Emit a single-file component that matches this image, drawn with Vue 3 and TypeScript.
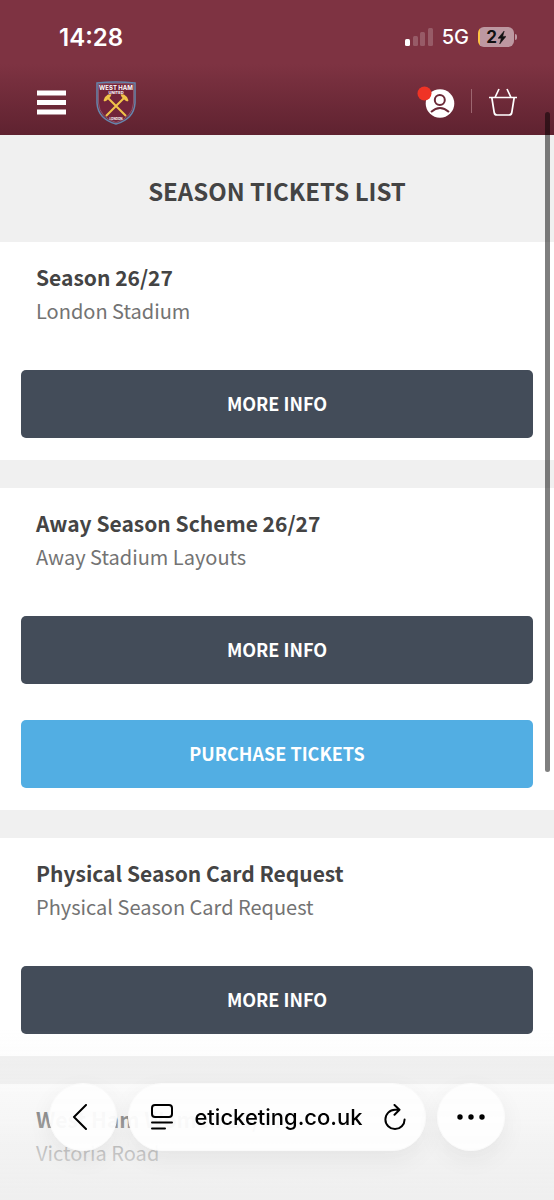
<script setup lang="ts">
interface Ticket {
  title: string
  venue: string
  actions: { label: string; buy?: boolean }[]
}

const tickets: Ticket[] = [
  { title: 'Season 26/27', venue: 'London Stadium', actions: [{ label: 'MORE INFO' }] },
  {
    title: 'Away Season Scheme 26/27',
    venue: 'Away Stadium Layouts',
    actions: [{ label: 'MORE INFO' }, { label: 'PURCHASE TICKETS', buy: true }],
  },
  { title: 'Physical Season Card Request', venue: 'Physical Season Card Request', actions: [{ label: 'MORE INFO' }] },
  { title: 'West Ham Women 26/27', venue: 'Victoria Road', actions: [] },
]

const bars = [
  { x: 0, y: 11, h: 7, on: true },
  { x: 8, y: 8, h: 10, on: false },
  { x: 15, y: 4, h: 14, on: false },
  { x: 23, y: 0, h: 18, on: false },
]
</script>

<template>
  <div class="screen">
    <header class="top">
      <div class="status">
        <time class="clock">14:28</time>
        <div class="signals">
          <svg width="28" height="18" viewBox="0 0 28 18" aria-hidden="true">
            <rect v-for="b in bars" :key="b.x" :x="b.x" :y="b.y" width="5" :height="b.h" rx="1.5" fill="#fff" :fill-opacity="b.on ? 1 : 0.2" />
          </svg>
          <span class="network">5G</span>
          <span class="battery">
            <span class="level">2</span>
            <svg width="8" height="13" viewBox="0 0 8 13" aria-hidden="true"><path d="M6.2 0 0 7.3h3.3L1.700 13 8 5.400H4.700z" fill="#111" stroke="#111" stroke-width=".5" /></svg>
          </span>
        </div>
      </div>
      <nav class="nav" aria-label="Main">
        <button class="plain" type="button" aria-label="Menu">
          <svg width="29" height="26" viewBox="0 0 29 26"><path d="M0 3h29M0 12.5h29M0 22h29" stroke="#fff" stroke-width="5" /></svg>
        </button>
        <a class="crest" href="#" aria-label="West Ham United home">
          <svg width="40" height="44" viewBox="0 0 40 44">
            <path d="M1 2Q20 0 39 2V22Q38 38 20 43Q2 38 1 22Z" fill="#72243a" stroke="#6686ad" stroke-width="1.5" />
            <path d="M2.5 3.2Q20 1.500 37.500 3.200V22Q36.500 36.500 20 41.500Q3.500 36.500 2.500 22Z" fill="none" stroke="#c9ccd8" stroke-width=".3" />
            <text x="20" y="8.500" class="crest-name">WEST HAM</text>
            <text x="20" y="12.500" class="crest-sub">UNITED</text>
            <path d="M12 17 30 35M28 17 10 35" stroke="#f1c44a" stroke-width="2" />
            <path d="M7.500 19.500 9 16l3-2.500 3.500-.300-1.200 2.800-3.600 3.500-2 1zM32.500 19.500 31 16l-3-2.500-3.500-.300 1.200 2.800 3.600 3.500 2 1z" fill="#f1c44a" />
            <text x="20" y="38.500" class="crest-city">LONDON</text>
          </svg>
        </a>
        <div class="account">
          <button class="plain profile" type="button" aria-label="Account">
            <svg width="38" height="34" viewBox="0 0 38 34">
              <circle cx="23" cy="18.500" r="14.300" fill="#fff" />
              <circle cx="22.800" cy="15" r="5" fill="none" stroke="#6b2937" stroke-width="2" />
              <path d="M14 27q9-8 18 0" fill="none" stroke="#6b2937" stroke-width="2" />
              <circle cx="7.500" cy="8.500" r="7" fill="#ef3325" />
            </svg>
          </button>
          <span class="divider"></span>
          <button class="plain basket" type="button" aria-label="Basket">
            <svg width="28" height="28" viewBox="0 0 28 28" fill="none" stroke="#fff" stroke-width="1.700" stroke-linejoin="round">
              <path d="M0 9.500h28M10 1 6 9.500M18 1l4 8.500M2.800 9.500l2.400 15q.4 2.500 2.800 2.500h12q2.400 0 2.800-2.500l2.400-15" />
            </svg>
          </button>
        </div>
      </nav>
    </header>

    <main>
      <h1 class="heading">SEASON TICKETS LIST</h1>
      <section v-for="t in tickets" :key="t.title" class="card">
        <div class="info">
          <h2 class="title">{{ t.title }}</h2>
          <p class="venue">{{ t.venue }}</p>
        </div>
        <div class="actions">
          <button v-for="a in t.actions" :key="a.label" class="action" :class="{ buy: a.buy }" type="button">
            {{ a.label }}
          </button>
        </div>
      </section>
    </main>

    <div class="scroll-thumb"></div>
    <footer class="browser">
      <button class="glass round" type="button" aria-label="Back">
        <svg class="back-icon" width="16" height="26" viewBox="0 0 16 26"><path d="M14 1 2 13l12 12" fill="none" stroke="#000" stroke-width="2" stroke-linecap="round" stroke-linejoin="round" /></svg>
      </button>
      <div class="glass address">
        <button class="plain" type="button" aria-label="Page settings">
          <svg width="22" height="26" viewBox="0 0 22 26" fill="none" stroke="#000" stroke-width="2" stroke-linecap="round">
            <rect x="1" y="1" width="20" height="12" rx="3" /><path d="M1 18.500h20M1 24.500h13" />
          </svg>
        </button>
        <button class="plain url" type="button">eticketing.co.uk</button>
        <button class="plain" type="button" aria-label="Reload">
          <svg width="22" height="26" viewBox="0 0 22 26" fill="none" stroke="#000" stroke-width="2" stroke-linecap="round" stroke-linejoin="round">
            <path d="M15 5.800H11A9.600 9.600 0 1 0 20.600 15.400M10.500 1l5 4.800-5 5" />
          </svg>
        </button>
      </div>
      <button class="glass round" type="button" aria-label="More">
        <svg width="28" height="6" viewBox="0 0 28 6"><circle cx="3" cy="3" r="2.700" /><circle cx="14" cy="3" r="2.700" /><circle cx="25" cy="3" r="2.700" /></svg>
      </button>
    </footer>
  </div>
</template>

<style>
body {
  margin: 0;
}
</style>

<style scoped>
* {
  box-sizing: border-box;
}
.screen {
  height: 100vh;
  overflow: hidden;
  background: #f0f0f0;
  font-family: "Noto Sans CJK SC", "Open Sans", sans-serif;
}
button {
  font: inherit;
  border: 0;
  cursor: pointer;
}
.plain {
  display: flex;
  padding: 0;
  background: none;
}
svg {
  display: block;
}
.top {
  background: linear-gradient(#7e3342 0, #7e3342 64px, #5f2230 135px);
  color: #fff;
  font-family: Inter, sans-serif;
}
.status {
  display: flex;
  justify-content: space-between;
  align-items: center;
  height: 70px;
  padding: 4px 40px 0 59px;
}
.clock {
  font-size: 24px;
  font-weight: 600;
}
.signals {
  display: flex;
  align-items: center;
}
.network {
  margin: 0 9px;
  font-size: 20px;
  font-weight: 500;
}
.battery {
  position: relative;
  display: flex;
  align-items: center;
  justify-content: center;
  gap: 1px;
  width: 36px;
  height: 20px;
  border-radius: 6px;
  background: linear-gradient(90deg, #ffc543 2px, #bd98a1 2px);
  color: #111;
  font-size: 17px;
  font-weight: 700;
  line-height: 20px;
}
.battery::after {
  content: "";
  position: absolute;
  right: -3px;
  top: 7px;
  width: 2px;
  height: 6px;
  border-radius: 0 2px 2px 0;
  background: #bd98a1;
}
.nav {
  display: flex;
  align-items: center;
  height: 65px;
  padding: 0 37px;
}
.crest {
  margin-left: 30px;
}
.crest text {
  fill: #fff;
  text-anchor: middle;
  font-weight: 700;
}
.crest .crest-name {
  font-size: 6px;
}
.crest .crest-sub {
  font-size: 4px;
}
.crest .crest-city {
  font-size: 3px;
}
.account {
  display: flex;
  align-items: center;
  margin-left: auto;
}
.profile,
.basket {
  margin-bottom: 2px;
}
.divider {
  width: 1px;
  height: 24px;
  margin: 0 17px 4px 16px;
  background: #9d6670;
}
.heading {
  margin: 0;
  height: 107px;
  text-align: center;
  line-height: 112px;
  font-size: 24px;
  font-weight: 700;
  color: #444;
}
.card {
  padding: 18px 21px 22px;
  margin-bottom: 28px;
  background: #fff;
}
.info {
  padding: 0 15px;
  height: 110px;
}
.title {
  margin: 0;
  font-size: 21px;
  line-height: 34px;
  font-weight: 700;
  color: #444;
}
.venue {
  margin: 0;
  font-size: 20px;
  line-height: 34px;
  color: #737373;
}
.actions {
  display: grid;
  gap: 36px;
}
.action {
  height: 68px;
  padding: 0 16px 2px;
  border-radius: 5px;
  background: #434c59;
  color: #fff;
  font-size: 18px;
  font-weight: 700;
}
.buy {
  background: #52aee3;
}
.scroll-thumb {
  position: fixed;
  top: 112px;
  right: 4px;
  width: 5px;
  height: 55vh;
  border-radius: 3px;
  background: rgba(0, 0, 0, 0.5);
}
.browser {
  position: fixed;
  inset: auto 0 0;
  display: flex;
  gap: 11px;
  padding: 53px 49px 49px;
  background: linear-gradient(rgba(238, 238, 238, 0), rgba(238, 238, 238, 0.3) 35%, rgba(236, 236, 236, 0.7) 75%, #efefef);
}
.glass {
  display: flex;
  align-items: center;
  height: 68px;
  border-radius: 34px;
  background: rgba(254, 254, 254, 0.95);
  border: 1px solid #fafafa;
  box-shadow: 0 8px 24px rgba(0, 0, 0, 0.06);
}
.round {
  justify-content: center;
  width: 68px;
  padding: 0;
}
.back-icon {
  margin-right: 6px;
}
.address {
  flex: 1;
  justify-content: space-between;
  padding: 0 19px 0 22px;
}
.url {
  color: #000;
  font-family: Inter, sans-serif;
  font-size: 22px;
  font-weight: 500;
}
</style>
